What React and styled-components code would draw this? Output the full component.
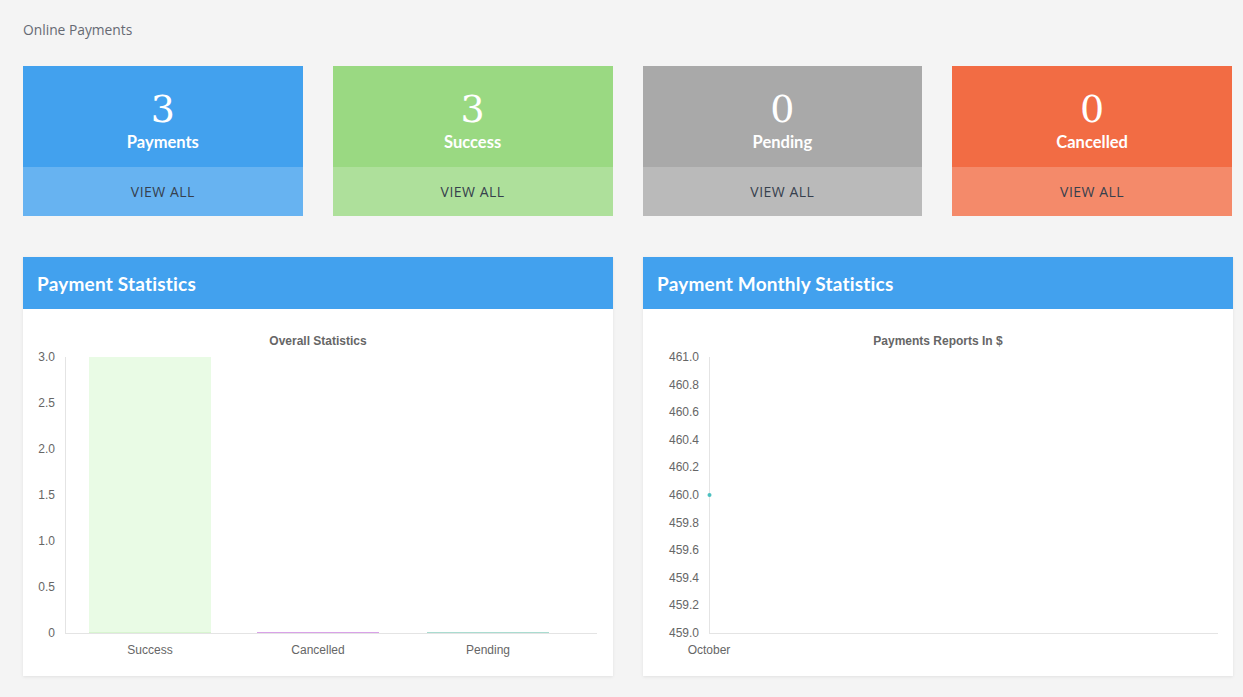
import React from "react";
import styled, { createGlobalStyle } from "styled-components";

const Global = createGlobalStyle`
  body {
    margin: 0;
    background: #f4f4f4;
    font-family: "Open Sans", "Liberation Sans", sans-serif;
  }
`;

const Page = styled.div`
  padding: 20px 11px 20px 23px;
`;

const Title = styled.div`
  font-size: 13.8px;
  color: #666a73;
  height: 20px;
  line-height: 20px;
  margin-bottom: 26px;
`;

const Cards = styled.div`
  display: grid;
  grid-template-columns: repeat(4, 1fr);
  column-gap: 30px;
`;

const Card = styled.div`
  display: flex;
  flex-direction: column;
`;

const CardTop = styled.div`
  height: 101px;
  background: ${({ color }) => color};
  color: #fff;
  display: flex;
  flex-direction: column;
  align-items: center;
  padding-top: 21px;
  box-sizing: border-box;
`;

const Count = styled.div`
  font-family: "DejaVu Serif", "Liberation Serif", serif;
  font-size: 38px;
  line-height: 44px;
`;

const Label = styled.div`
  font-family: "Lato", sans-serif;
  font-weight: 700;
  font-size: 16.5px;
  line-height: 20px;
  margin-top: 1px;
`;

const CardBottom = styled.div`
  height: 49px;
  background: ${({ color }) => color};
  display: flex;
  align-items: center;
  justify-content: center;
  font-size: 14px;
  letter-spacing: 0.5px;
  color: #36404d;
`;

const Panels = styled.div`
  display: grid;
  grid-template-columns: 1fr 1fr;
  column-gap: 30px;
  margin-top: 41px;
`;

const Panel = styled.div`
  background: #fff;
  box-shadow: 0 1px 3px rgba(0, 0, 0, 0.08);
`;

const PanelHead = styled.div`
  height: 52px;
  background: #42a1ee;
  color: #fff;
  display: flex;
  align-items: center;
  padding-left: 14px;
  font-family: "Lato", sans-serif;
  font-weight: 700;
  font-size: 19px;
  letter-spacing: 0.2px;
`;

const ChartBox = styled.div`
  height: 367px;
`;

const text = { fontFamily: "Liberation Sans, Arial, sans-serif", fill: "#666" };

const cards = [
  { n: 3, l: "Payments", top: "#42a1ee", bot: "#67b3f1" },
  { n: 3, l: "Success", top: "#9ad982", bot: "#aee09b" },
  { n: 0, l: "Pending", top: "#a9a9a9", bot: "#bababa" },
  { n: 0, l: "Cancelled", top: "#f26c44", bot: "#f48a6a" },
];

const BarChart = () => {
  const x0 = 42, x1 = 574, yTop = 48, yBot = 324;
  const ticks = ["3.0", "2.5", "2.0", "1.5", "1.0", "0.5", "0"];
  const step = (yBot - yTop) / 6;
  const cats = [
    { l: "Success", v: 3, c: "#e9fbe5", s: "#d8f5d0", cx: 127 },
    { l: "Cancelled", v: 0, c: "#d9a1e8", s: "#d9a1e8", cx: 295 },
    { l: "Pending", v: 0, c: "#a9dcd0", s: "#a9dcd0", cx: 465 },
  ];
  return (
    <svg width="590" height="367">
      <text x="295" y="36" textAnchor="middle" fontSize="12" fontWeight="bold" style={text}>
        Overall Statistics
      </text>
      {ticks.map((t, i) => (
        <text key={t} x="32" y={yTop + i * step + 4} textAnchor="end" fontSize="12" style={text}>
          {t}
        </text>
      ))}
      {cats.map((c) => {
        const bx = c.cx - 61;
        const h = (c.v / 3) * (yBot - yTop);
        return (
          <g key={c.l}>
            {h > 0 && <rect x={bx} y={yBot - h} width="122" height={h} fill={c.c} />}
            <line x1={bx} x2={bx + 122} y1={yBot - 0.5} y2={yBot - 0.5} stroke={c.s} />
            <text x={c.cx} y={yBot + 21} textAnchor="middle" fontSize="12" style={text}>
              {c.l}
            </text>
          </g>
        );
      })}
      <line x1={x0 + 0.5} x2={x0 + 0.5} y1={yTop} y2={yBot} stroke="#e4e4e4" />
      <line x1={x0} x2={x1} y1={yBot + 0.5} y2={yBot + 0.5} stroke="#e4e4e4" />
    </svg>
  );
};

const LineChart = () => {
  const x0 = 66, x1 = 575, yTop = 48, yBot = 324;
  const ticks = ["461.0", "460.8", "460.6", "460.4", "460.2", "460.0", "459.8", "459.6", "459.4", "459.2", "459.0"];
  const step = (yBot - yTop) / 10;
  return (
    <svg width="590" height="367">
      <text x="295" y="36" textAnchor="middle" fontSize="12" fontWeight="bold" style={text}>
        Payments Reports In $
      </text>
      {ticks.map((t, i) => (
        <text key={t} x="56" y={yTop + i * step + 4} textAnchor="end" fontSize="12" style={text}>
          {t}
        </text>
      ))}
      <line x1={x0 + 0.5} x2={x0 + 0.5} y1={yTop} y2={yBot} stroke="#e4e4e4" />
      <line x1={x0} x2={x1} y1={yBot + 0.5} y2={yBot + 0.5} stroke="#e4e4e4" />
      <circle cx={x0 + 0.5} cy={yTop + 5 * step} r="2" fill="#4bc0c0" />
      <text x={x0} y={yBot + 21} textAnchor="middle" fontSize="12" style={text}>
        October
      </text>
    </svg>
  );
};

export default function App() {
  return (
    <>
      <Global />
      <Page>
        <Title>Online Payments</Title>
        <Cards>
          {cards.map((c) => (
            <Card key={c.l}>
              <CardTop color={c.top}>
                <Count>{c.n}</Count>
                <Label>{c.l}</Label>
              </CardTop>
              <CardBottom color={c.bot}>VIEW ALL</CardBottom>
            </Card>
          ))}
        </Cards>
        <Panels>
          <Panel>
            <PanelHead>Payment Statistics</PanelHead>
            <ChartBox>
              <BarChart />
            </ChartBox>
          </Panel>
          <Panel>
            <PanelHead>Payment Monthly Statistics</PanelHead>
            <ChartBox>
              <LineChart />
            </ChartBox>
          </Panel>
        </Panels>
      </Page>
    </>
  );
}
